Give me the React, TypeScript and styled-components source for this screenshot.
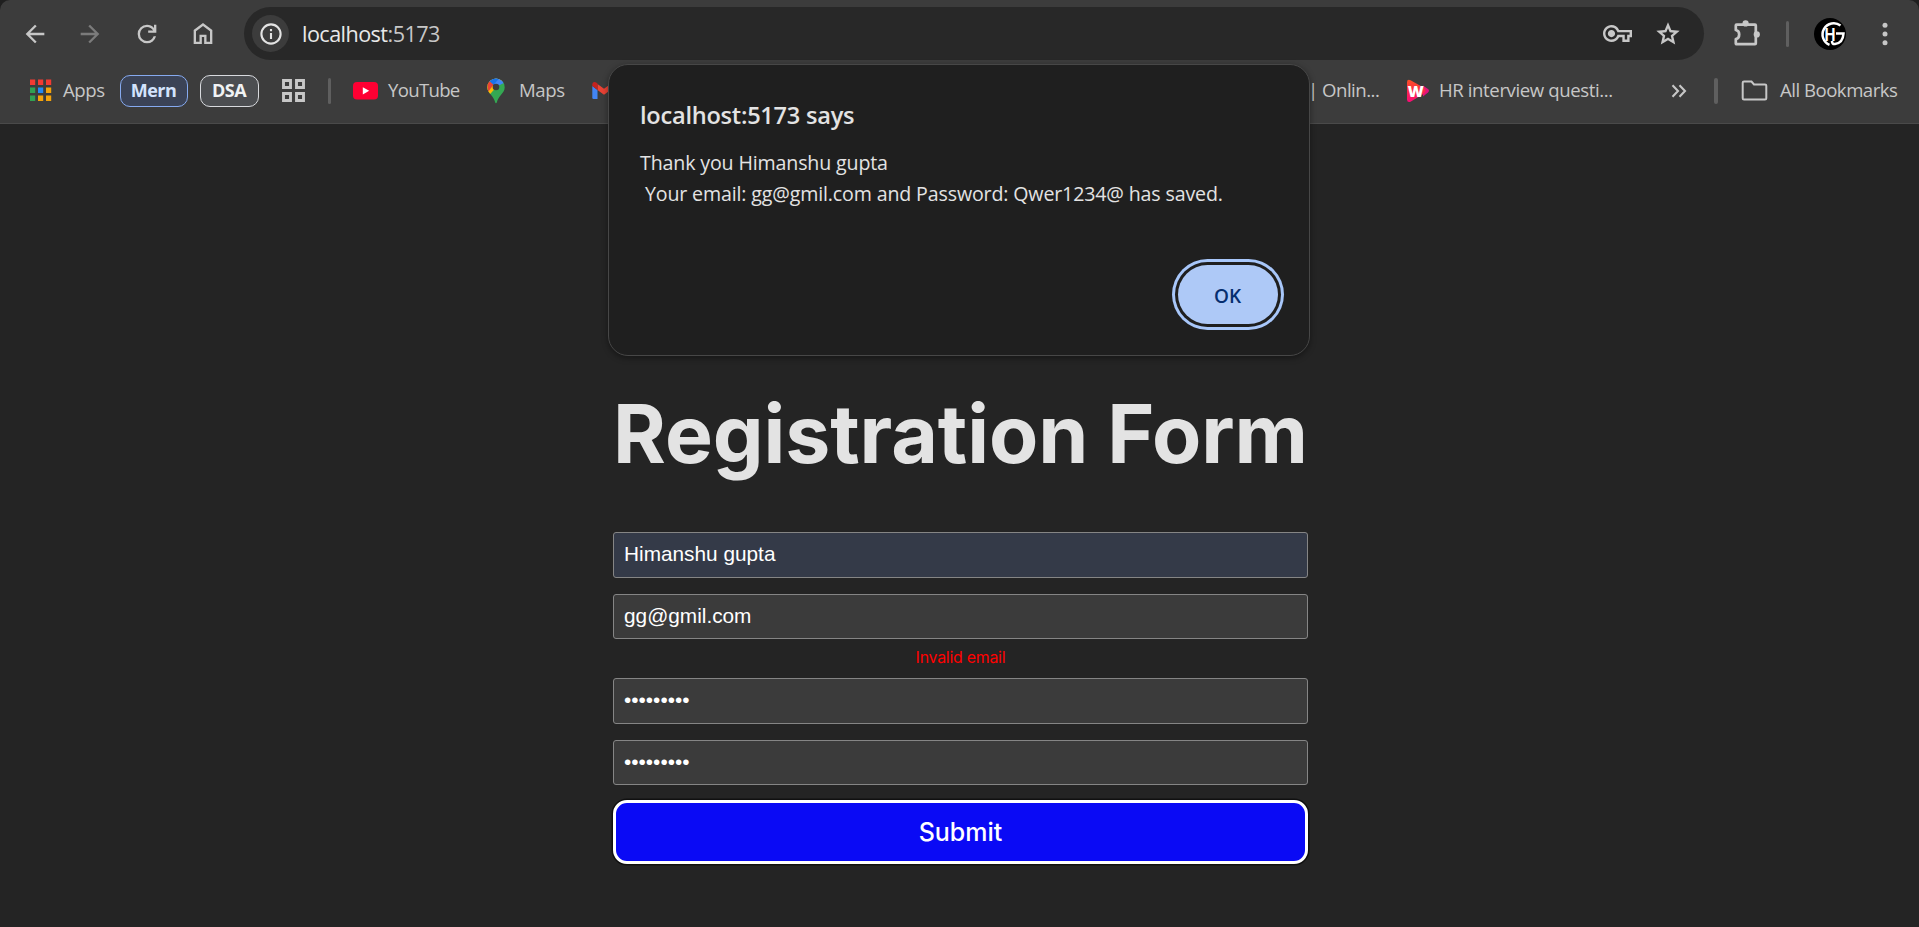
import React from "react";
import styled, { createGlobalStyle } from "styled-components";

const uiFont = `"Open Sans", "Noto Sans", sans-serif`;

const GlobalStyle = createGlobalStyle`
  * { box-sizing: border-box; }
  body { margin: 0; background: #242424; overflow: hidden; }
`;

const Window = styled.div`
  position: relative;
  display: flex;
  flex-direction: column;
  width: 1919px;
  height: 927px;
  overflow: hidden;
  background: #242424;
`;

const Chrome = styled.header`
  flex: none;
  height: 124px;
  background: #1f1f1f;
`;

const ChromeSurface = styled.div`
  height: 124px;
  background: #3c3c3c;
  border-bottom: 1px solid #4a4a4a;
  border-radius: 10px 10px 0 0;
`;

const NavRow = styled.div`
  display: flex;
  align-items: center;
  height: 60px;
  padding: 7px 0 0 21px;
`;

const NavButton = styled.span<{ $gap: number; $dim?: boolean }>`
  display: flex;
  flex: none;
  justify-content: center;
  width: 28px;
  margin-right: ${(p) => p.$gap}px;
  color: ${(p) => (p.$dim ? "#7b7b7b" : "#c7c7c7")};
`;

const Omnibox = styled.div`
  display: flex;
  flex: none;
  align-items: center;
  width: 1460px;
  height: 53px;
  padding: 0 22px 0 8px;
  border-radius: 27px;
  background: #282828;
  color: #c7c7c7;
`;

const SiteInfo = styled.span`
  display: flex;
  align-items: center;
  justify-content: center;
  width: 37px;
  height: 37px;
  border-radius: 50%;
  background: #3c3c3c;
  color: #e3e3e3;
`;

const Address = styled.span`
  flex: 1;
  margin-left: 13px;
  font: 400 21.6px/30px ${uiFont};
  letter-spacing: -0.55px;
  color: #c7c7c7;

  b {
    font-weight: 400;
    color: #e8e8e8;
  }
`;

const OmniIcons = styled.span`
  display: flex;
  align-items: center;
  gap: 22px;
`;

const Divider = styled.span<{ $w: number; $left: number; $right: number }>`
  flex: none;
  width: ${(p) => p.$w}px;
  height: 26px;
  margin-left: ${(p) => p.$left}px;
  margin-right: ${(p) => p.$right}px;
  border-radius: 2px;
  background: #5f5f5f;
`;

const ToolIcon = styled.span<{ $left: number }>`
  display: flex;
  flex: none;
  margin-left: ${(p) => p.$left}px;
  color: #c7c7c7;
`;

const BookmarkRow = styled.div`
  display: flex;
  align-items: center;
  height: 61px;
  padding-left: 29px;
`;

const BookmarkLabel = styled.span<{ $w: number; $left: number; $track?: number }>`
  flex: none;
  width: ${(p) => p.$w}px;
  margin-left: ${(p) => p.$left}px;
  padding-bottom: 1px;
  font: 400 18.6px/26px ${uiFont};
  letter-spacing: ${(p) => p.$track ?? -0.4}px;
  white-space: nowrap;
  color: #c7c7c7;
`;

const GroupChip = styled.span<{ $w: number; $left: number; $blue?: boolean }>`
  display: flex;
  flex: none;
  align-items: center;
  justify-content: center;
  width: ${(p) => p.$w}px;
  height: 32px;
  margin-left: ${(p) => p.$left}px;
  padding: 0 1px 1px 0;
  border: 1.6px solid ${(p) => (p.$blue ? "#86aaf0" : "#d8dade")};
  border-radius: 10px;
  background: ${(p) => (p.$blue ? "#3b4356" : "#4c4e51")};
  font: 700 18px/26px ${uiFont};
  letter-spacing: -0.5px;
  color: ${(p) => (p.$blue ? "#d3e3fd" : "#f1f3f4")};
`;

const Dialog = styled.section`
  position: absolute;
  top: 64px;
  left: 608px;
  display: flex;
  flex-direction: column;
  width: 702px;
  height: 292px;
  padding: 33px 31px 31px 31px;
  border: 1px solid #474747;
  border-radius: 20px;
  background: #1f1f1f;
  box-shadow: 0 2px 6px rgba(0, 0, 0, 0.4);
  font-family: ${uiFont};
  color: #e3e3e3;
`;

const DialogTitle = styled.h2`
  margin: 0;
  font: 600 23.6px/34px ${uiFont};
  letter-spacing: -0.25px;
`;

const DialogText = styled.p`
  margin: 15px 0 0;
  font-size: 19.6px;
  line-height: 31px;
  letter-spacing: -0.14px;
  white-space: pre;
`;

const DialogButton = styled.button`
  align-self: flex-end;
  width: 100px;
  height: 59px;
  margin-top: auto;
  padding: 2px 1px 0 0;
  border: 0;
  border-radius: 30px;
  background: #aec9f7;
  box-shadow: 0 0 0 3px #1f1f1f, 0 0 0 6px #a8c7fa;
  font: 600 19px/24px ${uiFont};
  color: #062e6f;
`;

const Page = styled.main`
  flex: 1;
  display: flex;
  justify-content: center;
  font-family: Inter, sans-serif;
`;

const Form = styled.form`
  display: flex;
  flex-direction: column;
  width: 695px;
  margin: 262px 0 0 2px;
`;

const Heading = styled.h1`
  display: flex;
  justify-content: center;
  margin: 0 0 50px;
  font-size: 80.5px;
  line-height: 96px;
  font-weight: 740;
  letter-spacing: -0.1px;
  white-space: nowrap;
  color: #e3e3e3;
`;

const Field = styled.input<{ $filled?: boolean; $h: number; $gap: number }>`
  width: 100%;
  height: ${(p) => p.$h}px;
  margin: 0 0 ${(p) => p.$gap}px;
  padding: 0 10px 2px;
  border: 1px solid #858585;
  border-radius: 3px;
  outline: 0;
  background: ${(p) => (p.$filled ? "#343a48" : "#3b3b3b")};
  font: 400 20.8px/24px "Liberation Sans", Arial, sans-serif;
  color: #fff;
`;

const FieldError = styled.p`
  margin: 0 0 6px;
  font-size: 15.8px;
  line-height: 28px;
  letter-spacing: -0.2px;
  text-align: center;
  color: #f00;
`;

const Submit = styled.button`
  height: 64px;
  padding: 0 0 1px;
  border: 3px solid #fff;
  border-radius: 14px;
  background: #0a0af5;
  box-shadow: 0 0 0 1.5px #101010;
  font: 500 25px/30px Inter, sans-serif;
  color: #fff;
`;

const Glyph = ({ size, d }: { size: number; d: string }) => (
  <svg width={size} height={size} viewBox="0 0 24 24" fill="currentColor">
    <path d={d} />
  </svg>
);

const paths = {
  back: "M20 11H7.83l5.59-5.59L12 4l-8 8 8 8 1.41-1.41L7.83 13H20v-2z",
  forward: "M4 11h12.17l-5.59-5.59L12 4l8 8-8 8-1.41-1.41L16.17 13H4v-2z",
  reload:
    "M12 20q-3.35 0-5.675-2.325T4 12t2.325-5.675T12 4q1.725 0 3.3.713T18 6.75V4h2v7h-7V9h4.2q-.8-1.4-2.187-2.2T12 6Q9.5 6 7.75 7.75T6 12t1.75 4.25T12 18q1.925 0 3.475-1.1T17.65 14h2.1q-.7 2.65-2.85 4.325T12 20",
  home: "M6 19h3v-6h6v6h3v-9l-6-4.5L6 10zm-2 2V9l8-6l8 6v12h-7v-6h-2v6z",
  key: "M22 19h-6v-4h-2.68c-1.14 2.42-3.6 4-6.32 4-3.86 0-7-3.14-7-7s3.14-7 7-7c2.72 0 5.17 1.58 6.32 4H24v6h-2v4zm-4-2h2v-4h2v-2H11.94l-.23-.67C11.01 8.34 9.11 7 7 7c-2.76 0-5 2.24-5 5s2.24 5 5 5c2.11 0 4.01-1.34 4.71-3.33l.23-.67H18v4zM7 15c-1.65 0-3-1.35-3-3s1.35-3 3-3 3 1.35 3 3-1.35 3-3 3z",
  star: "m8.85 16.825l3.15-1.9l3.15 1.925l-.825-3.6l2.775-2.4l-3.65-.325l-1.45-3.4l-1.45 3.375l-3.65.325l2.775 2.425zM5.825 21l1.625-7.025L2 9.25l7.2-.625L12 2l2.8 6.625l7.2.625l-5.45 4.725L18.175 21L12 17.275z",
};

const InfoIcon = () => (
  <svg width="24" height="24" viewBox="0 0 24 24" fill="none" stroke="currentColor" strokeWidth="2.1">
    <circle cx="12" cy="12" r="9.6" />
    <path d="M12 11v6" />
    <path d="M12 7v2.2" />
  </svg>
);

const PuzzleIcon = () => (
  <svg width="30" height="30" viewBox="0 0 30 30" fill="currentColor">
    <path
      d="M2.8 6.4q0-.8.8-.8H22q.8 0 .8.8v18q0 .8-.8.8H3.6q-.8 0-.8-.8V20q3.4-.8 3.4-4.6T2.8 11z"
      fill="none"
      stroke="currentColor"
      strokeWidth="2.7"
      strokeLinejoin="round"
    />
    <circle cx="12.6" cy="4.4" r="3.1" />
    <circle cx="23.8" cy="15.4" r="3.1" />
  </svg>
);

const Avatar = () => (
  <svg width="32" height="32" viewBox="0 0 32 32">
    <circle cx="16" cy="16" r="16" fill="#000" />
    <path
      d="M26.500 7.500A11.200 11.200 0 1 0 15.500 26.800M22 15.500h7.500q-.5 9.500-8.500 10.500-3 .5-3-3"
      fill="none"
      stroke="#fff"
      strokeWidth="2.5"
    />
    <text x="10.500" y="23" fontFamily="Liberation Sans, sans-serif" fontWeight="700" fontSize="19" textLength="11" lengthAdjust="spacingAndGlyphs" fill="#fff">
      H
    </text>
  </svg>
);

const MenuIcon = () => (
  <svg width="6" height="24" viewBox="0 0 6 24" fill="currentColor">
    <circle cx="3" cy="3.300" r="2.500" />
    <circle cx="3" cy="12" r="2.500" />
    <circle cx="3" cy="20.700" r="2.500" />
  </svg>
);

const appColors = ["#f33a32", "#f33a32", "#f33a32", "#30a152", "#2289f4", "#f5a30a", "#30a152", "#f5a30a", "#f5a30a"];

const AppsIcon = () => (
  <svg width="23" height="23" viewBox="0 0 23 23">
    {appColors.map((c, i) => (
      <rect key={i} x={1 + (i % 3) * 8} y={0.5 + Math.floor(i / 3) * 8} width="5.2" height="5.500" fill={c} />
    ))}
  </svg>
);

const GridIcon = () => (
  <svg width="23" height="23" viewBox="0 0 23 23" fill="none" stroke="currentColor" strokeWidth="2.900">
    <path d="M1.500 1.500h7v7h-7zM14.500 1.500h7v7h-7zM1.500 14.500h7v7h-7zM14.500 14.500h7v7h-7z" />
  </svg>
);

const YouTubeIcon = () => (
  <svg width="25" height="18" viewBox="0 0 25 18">
    <rect width="25" height="17.500" rx="4" fill="#ff0033" />
    <path d="M9.800 5.200v7.200l6.400-3.600z" fill="#fff" />
  </svg>
);

const MapsIcon = () => (
  <svg width="18" height="26" viewBox="0 0 18 26">
    <defs>
      <clipPath id="pin">
        <path d="M9 .5a8.700 8.700 0 0 1 8.700 8.700c0 3.600-2 5.600-4.200 8.300-2 2.400-3 4.500-3.600 6.800q-.9 2-1.800 0c-.6-2.300-1.600-4.400-3.600-6.800C2.300 14.800.3 12.800.3 9.200A8.700 8.700 0 0 1 9 .5z" />
      </clipPath>
    </defs>
    <g clipPath="url(#pin)">
      <path d="M0 0h18v26H0z" fill="#34a853" />
      <path d="M0 19.500L17.500 0H0z" fill="#fbbc04" />
      <path d="M0 0l2.200 3.500L8.500 9 18 4.500V0z" fill="#4285f4" />
      <path d="M2.200 3.500L6 7.500 12.500 0H0z" fill="#1a73e8" />
      <path d="M0 5l2.200-2.100L6.500 6.800 1 14z" fill="#ea4335" />
    </g>
    <circle cx="9" cy="9" r="3.300" fill="#3c3c3c" />
  </svg>
);

const GmailIcon = () => (
  <svg width="24" height="18" viewBox="0 0 24 18">
    <path d="M.3 4l5.200 4v9H1.600Q.3 17 .3 15.700z" fill="#4285f4" />
    <path d="M23.700 4l-5.200 4v9h3.900q1.300 0 1.300-1.300z" fill="#34a853" />
    <path d="M5.500 2L12 6.800 18.500 2v6L12 12.800 5.500 8z" fill="#ea4335" />
    <path d="M.3 2.500C.3.200 2.700-.6 4.500.8l1 .8V8L.3 4z" fill="#c5221f" />
    <path d="M23.700 2.500c0-2.300-2.400-3.100-4.200-1.700l-1 .8V8l5.200-4z" fill="#fbbc04" />
  </svg>
);

const WIcon = () => (
  <svg width="24" height="24" viewBox="0 0 24 24">
    <defs>
      <linearGradient id="play" x1="0" y1="0" x2="0" y2="1">
        <stop offset="0" stopColor="#fb5026" />
        <stop offset="0.5" stopColor="#fb2a48" />
        <stop offset="1" stopColor="#fb0a78" />
      </linearGradient>
    </defs>
    <path d="M17 6.500l5 3.500q2 1.600 0 3.500l-5 4z" fill="#e2127e" />
    <path d="M1 3.200Q1.200-.3 4.500 1.200L17.500 8.500q4 3 .2 6.200L4.500 22.800Q1.200 24 1 20.500z" fill="url(#play)" />
    <text x="1.800" y="17.500" fontFamily="Open Sans, sans-serif" fontWeight="800" fontSize="15" textLength="16" lengthAdjust="spacingAndGlyphs" fill="#fff">
      W
    </text>
  </svg>
);

const ChevronsIcon = () => (
  <svg width="16" height="14" viewBox="0 0 16 14" fill="none" stroke="currentColor" strokeWidth="2.100">
    <path d="M1.500 1.200L7 7l-5.500 5.800M8.500 1.200L14 7l-5.500 5.800" />
  </svg>
);

const FolderIcon = () => (
  <svg width="27" height="21" viewBox="0 0 27 21" fill="none" stroke="currentColor" strokeWidth="2">
    <path d="M3 1.500h7.500l2.500 3h11q1.300 0 1.300 1.300v12.400q0 1.300-1.300 1.300H3q-1.300 0-1.300-1.300V2.800Q1.700 1.500 3 1.500z" />
  </svg>
);

export default function App() {
  return (
    <Window>
      <GlobalStyle />
      <Chrome>
        <ChromeSurface>
          <NavRow>
            <NavButton $gap={27}><Glyph size={28} d={paths.back} /></NavButton>
            <NavButton $gap={29} $dim><Glyph size={28} d={paths.forward} /></NavButton>
            <NavButton $gap={28}><Glyph size={28} d={paths.reload} /></NavButton>
            <NavButton $gap={27}><Glyph size={29} d={paths.home} /></NavButton>
            <Omnibox>
              <SiteInfo><InfoIcon /></SiteInfo>
              <Address><b>localhost</b>:5173</Address>
              <OmniIcons>
                <Glyph size={29} d={paths.key} />
                <Glyph size={28} d={paths.star} />
              </OmniIcons>
            </Omnibox>
            <ToolIcon $left={29}><PuzzleIcon /></ToolIcon>
            <Divider $w={3} $left={23} $right={25} />
            <ToolIcon $left={0}><Avatar /></ToolIcon>
            <ToolIcon $left={36}><MenuIcon /></ToolIcon>
          </NavRow>
          <BookmarkRow>
            <AppsIcon />
            <BookmarkLabel $w={43} $left={11}>Apps</BookmarkLabel>
            <GroupChip $w={68} $left={14} $blue>Mern</GroupChip>
            <GroupChip $w={59} $left={12}>DSA</GroupChip>
            <ToolIcon $left={23}><GridIcon /></ToolIcon>
            <Divider $w={3} $left={23} $right={22} />
            <YouTubeIcon />
            <BookmarkLabel $w={72} $left={10} $track={-0.7}>YouTube</BookmarkLabel>
            <ToolIcon $left={27}><MapsIcon /></ToolIcon>
            <BookmarkLabel $w={46} $left={14}>Maps</BookmarkLabel>
            <ToolIcon $left={27}><GmailIcon /></ToolIcon>
            <BookmarkLabel $w={68} $left={692} $track={-0.5}>| Onlin...</BookmarkLabel>
            <ToolIcon $left={30}><WIcon /></ToolIcon>
            <BookmarkLabel $w={174} $left={9}>HR interview questi...</BookmarkLabel>
            <ToolIcon $left={58}><ChevronsIcon /></ToolIcon>
            <Divider $w={4} $left={27} $right={23} />
            <ToolIcon $left={0}><FolderIcon /></ToolIcon>
            <BookmarkLabel $w={118} $left={12} $track={-0.5}>All Bookmarks</BookmarkLabel>
          </BookmarkRow>
        </ChromeSurface>
      </Chrome>
      <Page>
        <Form onSubmit={(e) => e.preventDefault()}>
          <Heading>Registration Form</Heading>
          <Field $filled $h={46} $gap={16} readOnly value="Himanshu gupta" />
          <Field $h={45} $gap={5} readOnly value="gg@gmil.com" />
          <FieldError>Invalid email</FieldError>
          <Field $h={46} $gap={16} readOnly type="password" value="Qwer1234@" />
          <Field $h={45} $gap={15} readOnly type="password" value="Qwer1234@" />
          <Submit type="submit">Submit</Submit>
        </Form>
      </Page>
      <Dialog role="alertdialog">
        <DialogTitle>localhost:5173 says</DialogTitle>
        <DialogText>{"Thank you Himanshu gupta\n Your email: gg@gmil.com and Password: Qwer1234@ has saved."}</DialogText>
        <DialogButton>OK</DialogButton>
      </Dialog>
    </Window>
  );
}
